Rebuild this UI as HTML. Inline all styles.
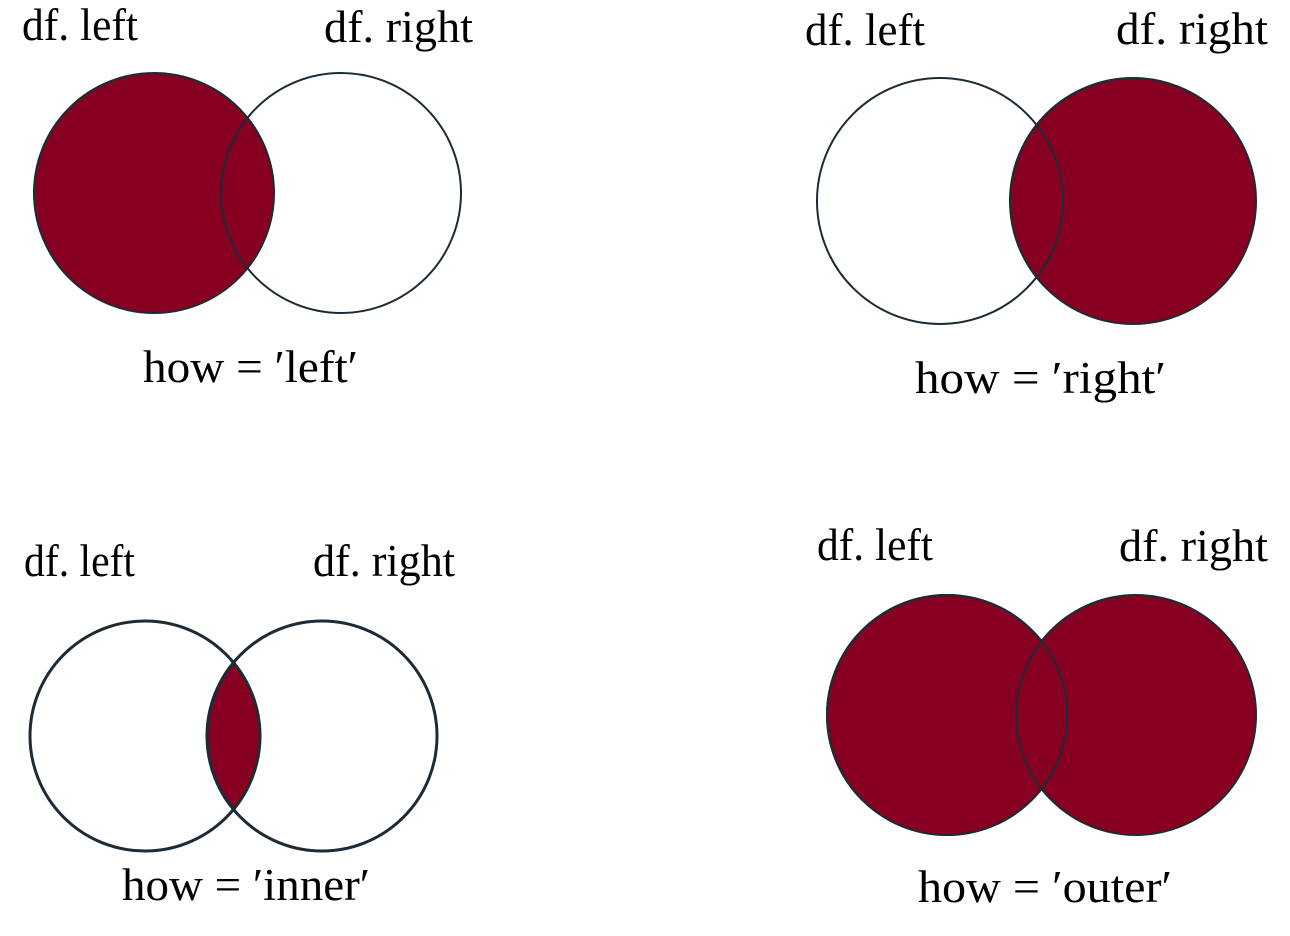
<!DOCTYPE html>
<html><head><meta charset="utf-8"><style>
html,body{margin:0;padding:0;background:#fff;width:1290px;height:936px;overflow:hidden}
text{font-family:"Liberation Serif",serif;font-size:45px;fill:#000}
</style></head><body>
<svg width="1290" height="936" viewBox="0 0 1290 936" xmlns="http://www.w3.org/2000/svg">
<defs>
<clipPath id="c1"><circle cx="145" cy="736" r="115"/></clipPath>
</defs>
<g stroke="#1c2b36" stroke-width="2">
<circle cx="154" cy="193" r="120" fill="#880021"/>
<circle cx="341" cy="193" r="120" fill="none"/>
<circle cx="1133" cy="201" r="123" fill="#880021"/>
<circle cx="940" cy="201" r="123" fill="none"/>
<circle cx="322" cy="736" r="115" fill="#880021" clip-path="url(#c1)" stroke="none"/>
<circle cx="145" cy="736" r="115" fill="none" stroke-width="3"/>
<circle cx="322" cy="736" r="115" fill="none" stroke-width="3"/>
<circle cx="947" cy="715" r="120" fill="#880021"/>
<circle cx="1136" cy="715" r="120" fill="#880021"/>
<circle cx="947" cy="715" r="120" fill="none"/>
</g>
<text x="22" y="40" textLength="116" lengthAdjust="spacingAndGlyphs">df. left</text>
<text x="324" y="42" textLength="149" lengthAdjust="spacingAndGlyphs">df. right</text>
<text x="143" y="382" textLength="215" lengthAdjust="spacingAndGlyphs">how = ′left′</text>
<text x="805" y="45" textLength="120" lengthAdjust="spacingAndGlyphs">df. left</text>
<text x="1116" y="44" textLength="152" lengthAdjust="spacingAndGlyphs">df. right</text>
<text x="915" y="393" textLength="251" lengthAdjust="spacingAndGlyphs">how = ′right′</text>
<text x="24" y="576" textLength="111" lengthAdjust="spacingAndGlyphs">df. left</text>
<text x="313" y="576" textLength="142" lengthAdjust="spacingAndGlyphs">df. right</text>
<text x="122" y="900" textLength="248" lengthAdjust="spacingAndGlyphs">how = ′inner′</text>
<text x="817" y="560" textLength="116" lengthAdjust="spacingAndGlyphs">df. left</text>
<text x="1119" y="561" textLength="149" lengthAdjust="spacingAndGlyphs">df. right</text>
<text x="918" y="902" textLength="254" lengthAdjust="spacingAndGlyphs">how = ′outer′</text>
</svg>
</body></html>
